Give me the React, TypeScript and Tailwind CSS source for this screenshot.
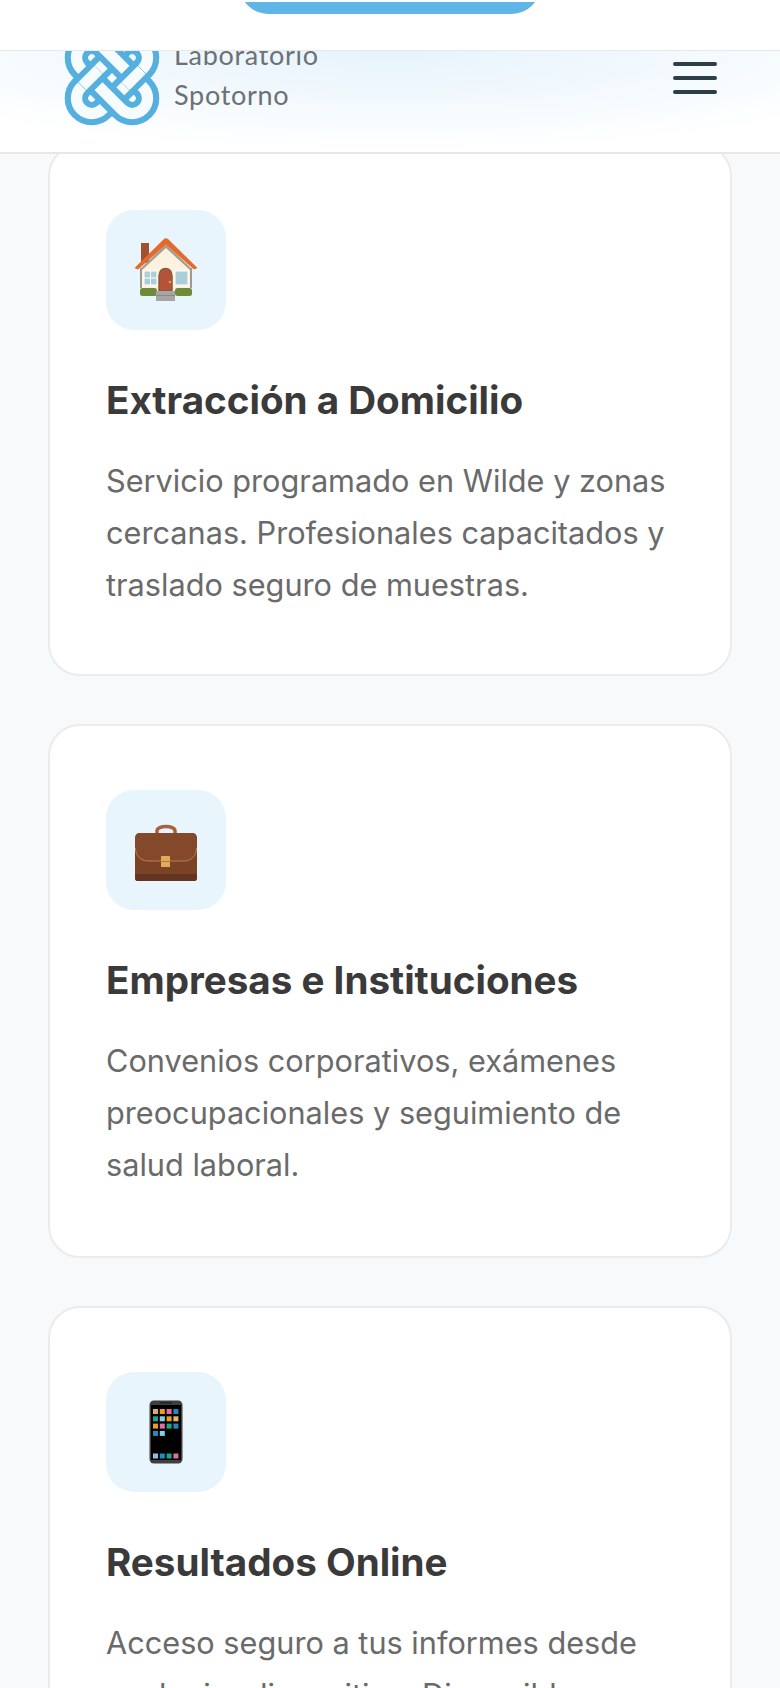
const Logo = () => {
  const a = "rotate(-45)";
  const b = "rotate(45)";
  const Ring = ({ t }: { t: string }) => (
    <g transform={t} fill="none">
      <rect x="-43" y="-15" width="86" height="30" rx="15" stroke="#55b0e0" strokeWidth="23" />
      <rect x="-43" y="-15" width="86" height="30" rx="15" stroke="#ffffff" strokeOpacity="0.95" strokeWidth="11" />
    </g>
  );
  return (
    <svg width="96" height="96" viewBox="-47 -47 94 94" fill="none" className="block shrink-0">
      <defs>
        <clipPath id="knot-over">
          <polygon points="5,0 21,-16 37,0 21,16" />
          <polygon points="-5,0 -21,-16 -37,0 -21,16" />
        </clipPath>
      </defs>
      <Ring t={a} />
      <Ring t={b} />
      <g clipPath="url(#knot-over)">
        <Ring t={a} />
      </g>
    </svg>
  );
};

const House = () => (
  <svg width="64" height="64" viewBox="0 0 64 64" className="block">
    <rect x="7" y="5" width="8" height="20" fill="#a0522d" />
    <path d="M7 30 L32 7 L57 30 V52 H7Z" fill="#fdf1e0" />
    <path d="M7 30 V50 M57 30 V50" stroke="#4a4036" strokeWidth="1" />
    <path d="M7 33 L32 10 L57 33 L57 30 L32 6 L7 30Z" fill="#a89f8f" />
    <path d="M0.5 30 L30 1 Q32 -0.5 34 1 L63.5 30 L60 31.5 L32 6.5 L4 31.5Z" fill="#e5692b" />
    <rect x="10" y="33" width="13" height="14" fill="#a9cfd8" stroke="#ffffff" strokeWidth="1" />
    <path d="M10 40 H23 M16.5 33 V47 M41 40 H54 M47.5 33 V47" stroke="#ffffff" strokeWidth="1" />
    <rect x="41" y="33" width="13" height="14" fill="#a9cfd8" stroke="#ffffff" strokeWidth="1" />
    <path d="M25 53 V38 C25 28 38 28 38 38 V53Z" fill="#b5533a" stroke="#8d5a36" strokeWidth="1.5" />
    <circle cx="36" cy="44" r="1.3" fill="#f0a020" />
    <rect x="6" y="50" width="17" height="8" rx="2.5" fill="#6f8b3a" />
    <rect x="41" y="50" width="17" height="8" rx="2.5" fill="#6f8b3a" />
    <rect x="22" y="53" width="19" height="10" fill="#a5a5a5" />
    <rect x="22" y="57" width="19" height="1" fill="#8a8a8a" />
  </svg>
);

const Briefcase = () => (
  <svg width="64" height="58" viewBox="0 0 64 58" className="block mt-[6px]">
    <path d="M23 11 V7 C23 1 41 1 41 7 V11" fill="none" stroke="#a5623c" strokeWidth="3.5" />
    <path d="M1 15 C1 11 3 9 6 9 H58 C61 9 63 11 63 15 L63 54 C63 56 62 57 60 57 H4 C2 57 1 56 1 54Z" fill="#7b4326" />
    <path d="M1.5 50 H62.5 L63 54 C63 56 62 57 60 57 H4 C2 57 1 56 1 54Z" fill="#633421" />
    <path d="M1 15 C1 11 3 9 6 9 H58 C61 9 63 11 63 15 V24 C63 32 57 37 50 37 H14 C7 37 1 32 1 24Z" fill="#84492b" />
    <path d="M1.5 24 C1.5 32 7 37 14 37 H50 C57 37 62.5 32 62.5 24" fill="none" stroke="#bd8050" strokeWidth="1" />
    <rect x="27" y="32" width="9" height="11" rx="0.5" fill="#e0a95c" />
    <rect x="27" y="37" width="9" height="0.8" fill="#a87434" />
  </svg>
);

const Phone = () => {
  const rows: string[][] = [
    ["#e3a868", "#ee9b22", "#e86aa0", "#2489bf"],
    ["#1aa688", "#85d0e8", "#ee9b22", "#e3b668"],
    ["#ee9b22", "#e86aa0", "#1aa688", "#2489bf"],
    ["#2489bf", "#85d0e8"],
  ];
  const dock = ["#8cc0ea", "#2489bf", "#1aa688", "#e86aa0"];
  return (
    <svg width="34" height="64" viewBox="0 0 34 64" className="block">
      <rect x="0.5" y="0.5" width="33" height="63" rx="4.5" fill="#3f3f3f" />
      <rect x="2" y="5" width="30" height="55" fill="#000" />
      <rect x="11" y="2" width="12" height="1.5" fill="#222" />
      {rows.map((r, i) =>
        r.map((c, j) => <rect key={`${i}-${j}`} x={4 + j * 6.8} y={9 + i * 7.3} width="5" height="5" fill={c} />)
      )}
      {dock.map((c, j) => <rect key={j} x={4 + j * 6.8} y={53.5} width="5" height="5" fill={c} />)}
    </svg>
  );
};

const Card = ({ icon, title, lines, className }: { icon: React.ReactNode; title: string; lines: string; className: string }) => (
  <div className={`bg-white border-2 border-[#e9ecef] rounded-[32px] px-[56px] pt-[64px] ${className}`}>
    <div className="w-[120px] h-[120px] rounded-[28px] bg-[#e8f5fd] flex items-center justify-center">{icon}</div>
    <h3 className="mt-[44px] text-[38.6px] leading-[53px] font-bold text-[#3a3a3a]">{title}</h3>
    <p className="mt-[28px] text-[30.7px] leading-[52px] text-[#6a6a6a]">{lines}</p>
  </div>
);

export default function App() {
  return (
    <div className="h-[1688px] w-[780px] overflow-hidden bg-[#f8f9fa] font-['Inter',sans-serif]">
      <div className="relative z-20 h-[51px] bg-white border-b border-[#e6e9eb] flex justify-center">
        <div className="mt-[2px] w-[300px] h-[12px] overflow-hidden">
          <div className="-mt-[44px] w-[300px] h-[56px] rounded-full bg-[#5fb6e6]" />
        </div>
      </div>
      <header className="relative z-10 h-[103px] overflow-hidden border-b-2 border-[#e4e8ea] bg-[radial-gradient(ellipse_560px_100px_at_50%_0%,#e6f3fc,#ffffff)] flex items-start justify-between pl-[64px] pr-[63px]">
        <div className="flex items-start gap-[14px] -mt-[21px]">
          <Logo />
          <div className="pt-[5px] text-[27px] leading-[40px] tracking-[0.7px] text-[#6b7175] font-['Lato',sans-serif]">
            <div>Laboratorio</div>
            <div>Spotorno</div>
          </div>
        </div>
        <div className="mt-[11px] flex flex-col gap-[10px] w-[44px]">
          <span className="block h-[4px] rounded-full bg-[#2c3e46]" />
          <span className="block h-[4px] rounded-full bg-[#2c3e46]" />
          <span className="block h-[4px] rounded-full bg-[#2c3e46]" />
        </div>
      </header>
      <main className="-mt-[10px] px-[48px] flex flex-col gap-[48px]">
        <Card className="h-[532px]" icon={<House />} title="Extracción a Domicilio" lines="Servicio programado en Wilde y zonas cercanas. Profesionales capacitados y traslado seguro de muestras." />
        <Card className="h-[534px]" icon={<Briefcase />} title="Empresas e Instituciones" lines="Convenios corporativos, exámenes preocupacionales y seguimiento de salud laboral." />
        <Card className="h-[534px]" icon={<Phone />} title="Resultados Online" lines="Acceso seguro a tus informes desde cualquier dispositivo. Disponible en todo momento." />
      </main>
    </div>
  );
}
